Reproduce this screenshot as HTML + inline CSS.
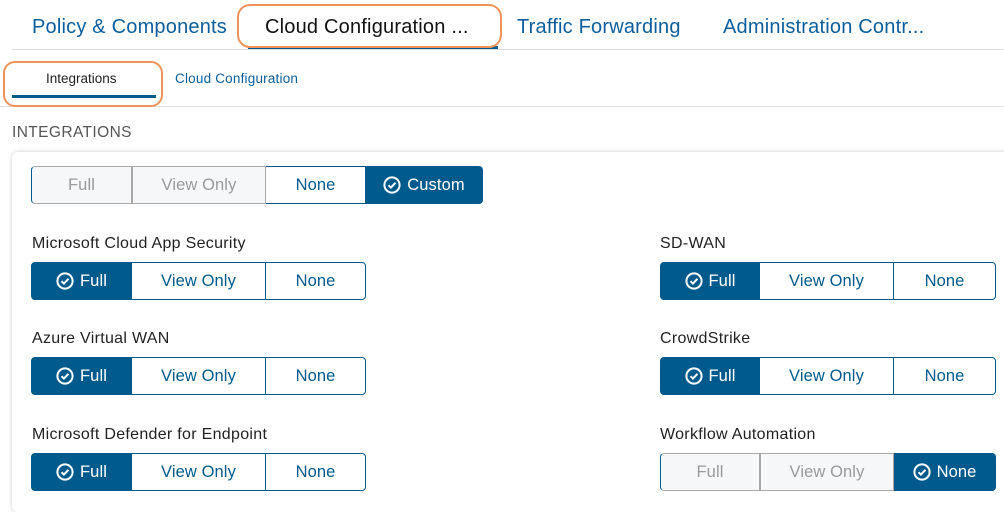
<!DOCTYPE html><html><head><style>
body{margin:0;width:1004px;height:505px;overflow:hidden;background:#fff;font-family:"Liberation Sans",sans-serif;position:relative}
.a{position:absolute;white-space:nowrap}
.t{font-size:20px;color:#0b5e9c;top:16px;letter-spacing:.2px}
.g{position:absolute;display:flex;height:38px;box-sizing:border-box}
.g div{box-sizing:border-box;border:1px solid #005a8c;border-left:none;display:flex;align-items:center;justify-content:center;font-size:16.5px;color:#005a8c;background:#fff;letter-spacing:.1px}
.g div:first-child{border-left:1px solid #005a8c;border-radius:4px 0 0 4px}
.g div:last-child{border-radius:0 4px 4px 0}
.g .on{background:#005a8c;color:#fff}
.g .dis{background:#f6f7f8;color:#9a9a9a;border-color:#a8a8a8}
.g .dis+.dis{border-left:1px solid #a8a8a8}
.lbl{font-size:16px;color:#222;letter-spacing:.3px}
svg{margin-right:6px}
</style></head><body>
<div class="a t" style="left:32px">Policy &amp; Components</div>
<div class="a t" style="left:265px;color:#111">Cloud Configuration ...</div>
<div class="a t" style="left:517px">Traffic Forwarding</div>
<div class="a t" style="left:723px">Administration Contr...</div>
<div class="a" style="left:12px;top:49px;width:992px;height:1px;background:#ddd"></div>
<div class="a" style="left:248px;top:46px;width:250px;height:3px;background:#005a8c"></div>
<div class="a" style="left:237px;top:4px;width:265px;height:44px;border:2px solid #f0935a;border-radius:13px;box-sizing:border-box"></div>
<div class="a" style="left:46px;top:71px;font-size:13.5px;color:#222">Integrations</div>
<div class="a" style="left:175px;top:71px;font-size:13.5px;color:#0b5e9c;letter-spacing:.2px">Cloud Configuration</div>
<div class="a" style="left:0;top:106px;width:1004px;height:1px;background:#ddd"></div>
<div class="a" style="left:12px;top:95px;width:144px;height:3px;background:#005a8c"></div>
<div class="a" style="left:3px;top:61px;width:160px;height:46px;border:2px solid #f0935a;border-radius:12px;box-sizing:border-box"></div>
<div class="a" style="left:12px;top:124px;font-size:15.5px;color:#555;letter-spacing:.4px">INTEGRATIONS</div>
<div class="a" style="left:12px;top:152px;width:1010px;height:360px;border-radius:6px;box-shadow:0 0 5px rgba(0,0,0,.2);background:#fff"></div>
<svg width="0" height="0" style="position:absolute"><defs><symbol id="c" viewBox="0 0 18 18"><circle cx="9" cy="9" r="7.6" fill="none" stroke="#fff" stroke-width="2"/><path d="M5.5 9.2l2.4 2.4 4.6-4.8" fill="none" stroke="#fff" stroke-width="2"/></symbol></defs></svg>
<div class="g" style="left:31px;top:166px"><div class="dis" style="width:101px">Full</div><div class="dis" style="width:134px">View Only</div><div style="width:100px">None</div><div class="on" style="width:117px"><svg width="18" height="18"><use href="#c"/></svg>Custom</div></div>

<div class="a lbl" style="left:32px;top:235px">Microsoft Cloud App Security</div>
<div class="a lbl" style="left:32px;top:330px">Azure Virtual WAN</div>
<div class="a lbl" style="left:32px;top:426px">Microsoft Defender for Endpoint</div>
<div class="a lbl" style="left:660px;top:235px">SD-WAN</div>
<div class="a lbl" style="left:660px;top:330px">CrowdStrike</div>
<div class="a lbl" style="left:660px;top:426px">Workflow Automation</div>

<div class="g" style="left:31px;top:262px"><div class="on" style="width:101px"><svg width="18" height="18"><use href="#c"/></svg>Full</div><div style="width:134px">View Only</div><div style="width:100px">None</div></div>
<div class="g" style="left:31px;top:357px"><div class="on" style="width:101px"><svg width="18" height="18"><use href="#c"/></svg>Full</div><div style="width:134px">View Only</div><div style="width:100px">None</div></div>
<div class="g" style="left:31px;top:453px"><div class="on" style="width:101px"><svg width="18" height="18"><use href="#c"/></svg>Full</div><div style="width:134px">View Only</div><div style="width:100px">None</div></div>
<div class="g" style="left:660px;top:262px"><div class="on" style="width:100px"><svg width="18" height="18"><use href="#c"/></svg>Full</div><div style="width:134px">View Only</div><div style="width:102px">None</div></div>
<div class="g" style="left:660px;top:357px"><div class="on" style="width:100px"><svg width="18" height="18"><use href="#c"/></svg>Full</div><div style="width:134px">View Only</div><div style="width:102px">None</div></div>
<div class="g" style="left:660px;top:453px"><div class="dis" style="width:100px">Full</div><div class="dis" style="width:134px">View Only</div><div class="on" style="width:102px"><svg width="18" height="18"><use href="#c"/></svg>None</div></div>
</body></html>
